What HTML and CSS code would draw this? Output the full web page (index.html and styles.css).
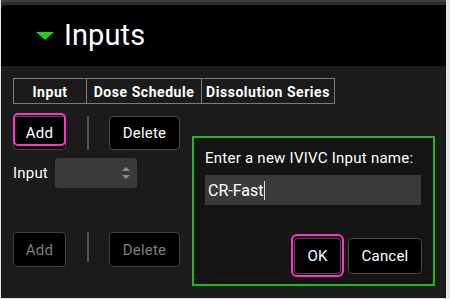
FILE: index.html
```html
<!DOCTYPE html>
<html>
<head>
<meta charset="utf-8">
<link rel="stylesheet" href="styles.css">
</head>
<body>
<div class="frame">
  <div class="topstrip"></div>
  <div class="header">
    <svg class="tri" width="18" height="8" viewBox="0 0 18 8"><polygon points="0,0 18,0 9,8" fill="#22d022"/></svg>
    <span class="title">Inputs</span>
  </div>
  <div class="content">
    <div class="tabs">
      <div class="tab t1">Input</div>
      <div class="tab t2">Dose Schedule</div>
      <div class="tab t3">Dissolution Series</div>
    </div>
    <div class="btnrow first">
      <button class="btn add focused-add">Add</button>
      <div class="sep"></div>
      <button class="btn del">Delete</button>
    </div>
    <div class="inputrow">
      <span class="lbl">Input</span>
      <div class="select">
        <svg class="spin" width="8" height="14" viewBox="0 0 8 14"><polygon points="0,5 8,5 4,1" fill="#8a8a8a"/><polygon points="0,9 8,9 4,13" fill="#8a8a8a"/></svg>
      </div>
    </div>
    <div class="btnrow second">
      <button class="btn add disabled">Add</button>
      <div class="sep"></div>
      <button class="btn del disabled">Delete</button>
    </div>
  </div>
  <div class="dialog">
    <div class="dlabel">Enter a new IVIVC Input name:</div>
    <div class="field">CR-Fast<span class="caret"></span></div>
    <div class="dbtns">
      <button class="btn ok focused">OK</button>
      <button class="btn cancel">Cancel</button>
    </div>
  </div>
</div>
</body>
</html>
```

FILE: styles.css
```css
* { box-sizing: border-box; }
html, body { margin: 0; padding: 0; }
body {
  background: #e6e6e6;
  width: 450px;
  height: 299px;
  overflow: hidden;
  font-family: Roboto, "Liberation Sans", sans-serif;
  color: #fff;
}
.frame {
  position: relative;
  margin-left: 1px;
  width: 445px;
  height: 298px;
  background: #1b1b1b;
}
.topstrip {
  height: 5px;
  background: #2c2c2c;
  border-top: 2px solid #3e3e3e;
}
.header {
  height: 61px;
  background: #000;
  border-top-left-radius: 6px;
  display: flex;
  align-items: center;
  padding-left: 35px;
}
.tri { display: block; margin-right: 10px; margin-top: 1px; }
.title {
  font-size: 29px;
  line-height: 1;
  letter-spacing: 0.1px;
  margin-top: -1px;
}
.content {
  padding: 12px 0 0 12px;
}
.tabs {
  display: flex;
  height: 26px;
}
.tab {
  border: 1px solid #7c7c7c;
  border-right: none;
  display: flex;
  align-items: center;
  justify-content: center;
  font-size: 14px;
  font-weight: bold;
  letter-spacing: 0.55px;
  color: #fff;
  padding-top: 1px;
  white-space: nowrap;
}
.tab.t1 { width: 73px; }
.tab.t2 { width: 115px; }
.tab.t3 { width: 134px; border-right: 1px solid #7c7c7c; }
.btnrow {
  display: flex;
  align-items: flex-start;
}
.btnrow.first { margin-top: 12px; }
.btnrow.second { margin-top: 44px; }
.btn {
  position: relative;
  height: 34px;
  background: #000;
  border: 1px solid #4a4a4a;
  border-radius: 4px;
  color: #fff;
  font-family: Roboto, "Liberation Sans", sans-serif;
  font-size: 15px;
  letter-spacing: 0.2px;
  padding: 0;
}
.btn.add { width: 53px; }
.btn.del { width: 71px; }
.btn.disabled { color: #7c7c7c; height: 35px; border-color: #404040; }
.focused-add::after {
  content: "";
  position: absolute;
  left: -1px;
  right: -1px;
  top: -4px;
  bottom: 3px;
  border: 2px solid #ff33cc;
  border-radius: 5px;
}
.sep {
  width: 2px;
  height: 34px;
  background: #555;
  margin: 0 20px 0 21px;
  border-radius: 1px;
}
.btnrow.second .sep { height: 30px; }
.inputrow {
  display: flex;
  align-items: center;
  margin-top: 8px;
}
.lbl {
  font-size: 15px;
  letter-spacing: 0.2px;
  width: 42px;
}
.select {
  width: 82px;
  height: 30px;
  background: #3a3a3a;
  border-radius: 4px;
  display: flex;
  align-items: center;
  justify-content: flex-end;
  padding-right: 7px;
}
.spin { display: block; }
.dialog {
  position: absolute;
  left: 191px;
  top: 136px;
  width: 243px;
  height: 150px;
  background: #141414;
  border: 2px solid #1fb81f;
  padding: 11px 11px 10px 11px;
  display: flex;
  flex-direction: column;
}
.dlabel {
  font-size: 15px;
  line-height: 18px;
  letter-spacing: 0.25px;
  color: #fff;
  white-space: nowrap;
}
.field {
  margin-top: 8px;
  height: 30px;
  width: 216px;
  background: #3a3a3a;
  font-size: 16px;
  display: flex;
  align-items: center;
  padding-left: 3px;
}
.caret {
  display: inline-block;
  width: 1px;
  height: 19px;
  background: #ddd;
  margin-left: 1px;
}
.dbtns {
  margin-top: auto;
  display: flex;
  justify-content: flex-end;
  gap: 7px;
}
.btn.ok { width: 47px; height: 36px; }
.btn.cancel { width: 74px; height: 36px; }
.focused::after {
  content: "";
  position: absolute;
  left: -4px;
  right: -4px;
  top: -5px;
  bottom: -4px;
  border: 2px solid #ff33cc;
  border-radius: 6px;
}
```
